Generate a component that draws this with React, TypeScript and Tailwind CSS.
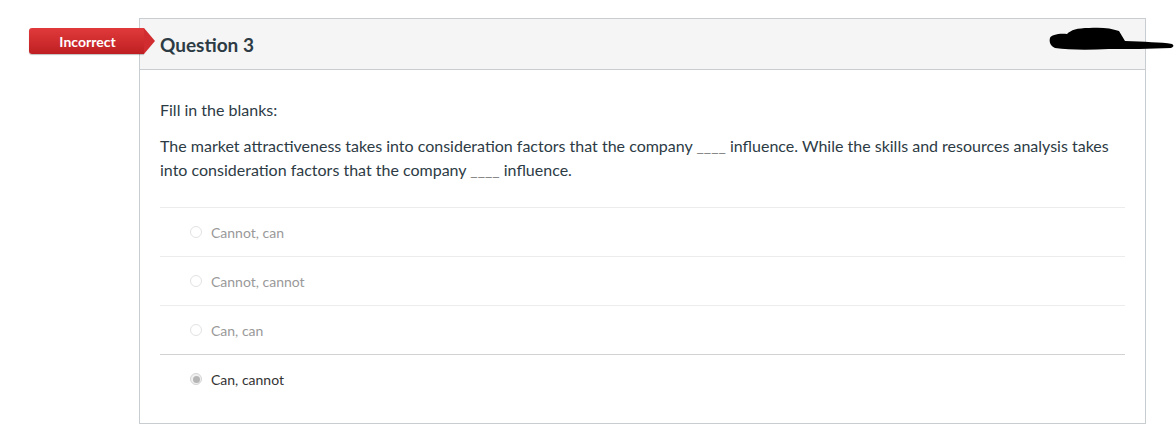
import React from 'react';

const answers = [
  { label: 'Cannot, can', selected: false },
  { label: 'Cannot, cannot', selected: false },
  { label: 'Can, can', selected: false },
  { label: 'Can, cannot', selected: true },
];

const Redaction = () => (
  <svg viewBox="0 0 125 25" className="w-[125px] h-[25px]">
    <path
      d="M1 12 C2 9 10 7 18 8 C22 4 28 2 40 2 C52 1 62 2 70 5 C72 8 74 12 76 15 C95 16 112 16 123 18 C125 19 125 21 122 22 C100 23 80 23 60 23 C40 24 20 24 6 22 C1 20 0 15 1 12 Z"
      fill="#000"
    />
  </svg>
);

const Radio = ({ checked }: { checked: boolean }) =>
  checked ? (
    <span className="flex items-center justify-center w-[12px] h-[12px] rounded-full border border-[#d4d4d4] bg-[#f0f0f0]">
      <span className="w-[7px] h-[7px] rounded-full bg-[#b5b5b5]" />
    </span>
  ) : (
    <span className="w-[12px] h-[12px] rounded-full border border-[#e2e2e2] bg-white" />
  );

export default function App() {
  return (
    <div className="w-[1174px] h-[435px] bg-white font-['Lato','Liberation_Sans',sans-serif] text-[#2d3b45] pt-[18px] pl-[139px] relative overflow-hidden">
      {/* Incorrect badge */}
      <div className="absolute left-[29px] top-[28px] z-10 flex items-center">
        <div className="w-[115px] h-[26px] bg-gradient-to-b from-[#e0393b] to-[#bf1f22] rounded-l-[3px] flex items-center justify-center pl-[2px] text-white text-[14px] font-bold shadow-[0_1px_1px_rgba(0,0,0,0.25)]">
          Incorrect
        </div>
        <div className="w-0 h-0 border-y-[13px] border-y-transparent border-l-[11px] border-l-[#d12d30]" />
      </div>

      {/* Redaction scribble */}
      <div className="absolute left-[1049px] top-[26px] z-10">
        <Redaction />
      </div>

      <div className="w-[1007px] h-[406px] border border-[#c7cdd1] bg-white">
        <div className="h-[51px] bg-[#f5f5f5] border-b border-[#c7cdd1] flex items-center pl-[20px]">
          <h2 className="text-[19px] font-bold text-[#2d3b45] leading-none">Question 3</h2>
        </div>

        <div className="pl-[20px] pr-[20px] pt-[30px]">
          <p className="text-[16px] leading-[20px]">Fill in the blanks:</p>
          <p className="text-[16px] leading-[24px] mt-[14px]">
            The market attractiveness takes into consideration factors that the company <span className="text-[#888]">____</span> influence. While the skills and resources analysis takes into consideration factors that the company <span className="text-[#888]">____</span> influence.
          </p>

          <div className="mt-[25px]">
            {answers.map((a, i) => (
              <div
                key={a.label}
                className={`h-[49px] flex items-center gap-[9px] pl-[30px] border-t ${i === 3 ? 'border-[#d2d2d2]' : 'border-[#ececec]'}`}
              >
                <Radio checked={a.selected} />
                <span className={`text-[14px] ${a.selected ? 'text-[#333]' : 'text-[#999]'}`}>{a.label}</span>
              </div>
            ))}
          </div>
        </div>
      </div>
    </div>
  );
}
